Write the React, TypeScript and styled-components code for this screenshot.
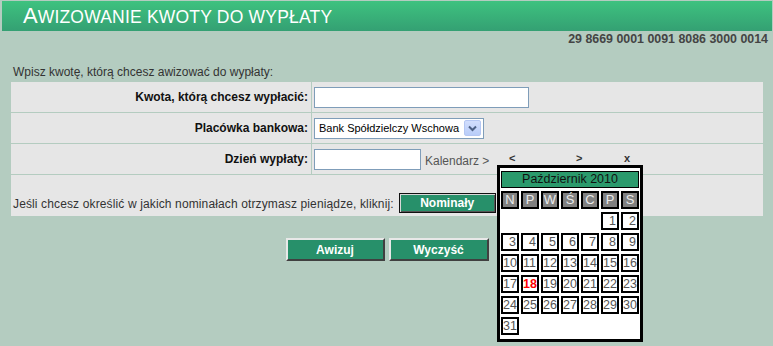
import React from "react";
import styled, { createGlobalStyle } from "styled-components";

const GlobalStyle = createGlobalStyle`
  html, body {
    margin: 0;
    padding: 0;
    background: #b4ccc0;
    font-family: "Liberation Sans", Arial, sans-serif;
    font-size: 12px;
    color: #222;
  }
`;

const Page = styled.div`
  width: 773px;
  height: 346px;
  overflow: hidden;
  padding-top: 1px;
  box-sizing: border-box;
`;

const Header = styled.div`
  margin: 0 1px 0 2px;
  height: 30px;
  background: linear-gradient(#3ec27f, #34a073);
  padding-left: 21px;
  color: #fff;
  font-size: 22px;
  line-height: 30px;
  white-space: nowrap;
`;

const TitleSmall = styled.span`
  font-size: 17.5px;
  text-transform: uppercase;
  letter-spacing: 0.2px;
`;

const Account = styled.div`
  text-align: right;
  padding-right: 5px;
  font-weight: bold;
  font-size: 12.4px;
  line-height: 14px;
  color: #444;
  padding-top: 1px;
`;

const Intro = styled.div`
  margin: 19px 0 3px 13px;
  line-height: 14px;
  color: #333;
`;

const FormWrap = styled.div`
  position: relative;
  margin-left: 11px;
  width: 752px;
`;

const FormGrid = styled.div`
  display: grid;
  grid-template-columns: 300px 1fr;
  gap: 1px;
`;

const LabelCell = styled.div`
  background: #e6e6e6;
  height: 30px;
  display: flex;
  align-items: center;
  justify-content: flex-end;
  padding-right: 3px;
  font-weight: bold;
  color: #111;
`;

const FieldCell = styled.div`
  background: #e6e6e6;
  height: 30px;
  display: flex;
  align-items: center;
  padding-left: 2px;
  gap: 4px;
`;

const WideCell = styled.div`
  grid-column: 1 / -1;
  background: #e6e6e6;
  height: 41px;
  display: flex;
  align-items: flex-end;
  padding: 0 0 3px 2px;
  gap: 5px;
  box-sizing: border-box;
`;

const WideText = styled.span`
  color: #333;
  line-height: 14px;
  padding-bottom: 2px;
  letter-spacing: 0.13px;
`;

const TextInput = styled.input<{ $w: number }>`
  width: ${(p) => p.$w}px;
  height: 21px;
  box-sizing: border-box;
  border: 1px solid #7f9db9;
  background: #fff;
  padding: 0 3px;
  margin: 0;
  font-family: inherit;
  font-size: 12px;
  outline: none;
`;

const SelectBox = styled.div`
  width: 170px;
  height: 21px;
  box-sizing: border-box;
  border: 1px solid #7f9db9;
  background: #fff;
  display: flex;
  align-items: center;
  justify-content: space-between;
  padding: 0 2px 0 4px;
  font-size: 11px;
  color: #000;
`;

const SelectArrow = styled.span`
  width: 17px;
  height: 16px;
  box-sizing: border-box;
  border: 1px solid #b5c7f3;
  border-radius: 2px;
  background: linear-gradient(#d2defd, #b9cdf9);
  display: flex;
  align-items: center;
  justify-content: center;
`;

const CalLink = styled.span`
  color: #555;
  line-height: 14px;
  padding-top: 4px;
`;

const GreenButton = styled.button<{ $w: number; $focus?: boolean }>`
  width: ${(p) => p.$w}px;
  height: ${(p) => (p.$focus ? 20 : 23)}px;
  box-sizing: border-box;
  margin: 0;
  padding: 0;
  background: #27906a;
  color: #fff;
  font-family: inherit;
  font-weight: bold;
  font-size: 12px;
  border: 2px solid;
  border-color: #e8e8e8 #404040 #404040 #e8e8e8;
  ${(p) =>
    p.$focus
      ? `border: 1px solid #111; box-shadow: inset 1px 1px 0 #d8d8d8, inset -1px -1px 0 #555;`
      : ""}
`;

const ButtonRow = styled.div`
  display: flex;
  justify-content: center;
  gap: 4px;
  margin-top: 22px;
  padding-left: 1px;
`;

const Popup = styled.div`
  position: absolute;
  left: 486px;
  top: 67px;
  width: 146px;
`;

const NavRow = styled.div`
  height: 16px;
  font-size: 11px;
  font-weight: bold;
  color: #333;
  line-height: 14px;
`;

const NavItem = styled.span<{ $x: number }>`
  position: absolute;
  left: ${(p) => p.$x}px;
  top: 2px;
`;

const CalBox = styled.div`
  width: 146px;
  box-sizing: border-box;
  border: 3px solid #000;
  background: #fff;
  padding: 3px 1px 4px 1px;
`;

const CalTitle = styled.div`
  height: 17px;
  box-sizing: border-box;
  border: 1px solid #000;
  background: #2b9a6c;
  color: #111;
  text-align: center;
  font-size: 12.5px;
  line-height: 15px;
  margin-bottom: 3px;
`;

const CalGrid = styled.div`
  display: grid;
  grid-template-columns: repeat(7, 18px);
  column-gap: 2px;
  row-gap: 3px;
`;

const DayHead = styled.div`
  height: 18px;
  box-sizing: border-box;
  border: 2px solid #000;
  background: #808080;
  color: #ececec;
  text-align: center;
  font-size: 13px;
  line-height: 14px;
`;

const DayCell = styled.div<{ $today?: boolean; $empty?: boolean }>`
  height: 18px;
  box-sizing: border-box;
  border: 2px solid ${(p) => (p.$empty ? "transparent" : "#000")};
  text-align: right;
  padding-right: 1px;
  font-size: 12.5px;
  line-height: 14px;
  color: ${(p) => (p.$today ? "#ff0000" : "#555")};
  font-weight: ${(p) => (p.$today ? "bold" : "normal")};
`;

const heads = ["N", "P", "W", "Ś", "C", "P", "S"];
const days: (number | null)[] = [
  null, null, null, null, null,
  ...Array.from({ length: 31 }, (_, i) => i + 1),
];

export default function App() {
  return (
    <>
      <GlobalStyle />
      <Page>
        <Header>
          A<TitleSmall>wizowanie kwoty do wypłaty</TitleSmall>
        </Header>
        <Account>29 8669 0001 0091 8086 3000 0014</Account>
        <Intro>Wpisz kwotę, którą chcesz awizować do wypłaty:</Intro>
        <FormWrap>
          <FormGrid>
            <LabelCell>Kwota, którą chcesz wypłacić:</LabelCell>
            <FieldCell>
              <TextInput $w={215} />
            </FieldCell>
            <LabelCell>Placówka bankowa:</LabelCell>
            <FieldCell>
              <SelectBox>
                <span>Bank Spółdzielczy Wschowa</span>
                <SelectArrow>
                  <svg width="9" height="7" viewBox="0 0 9 7">
                    <path d="M1 1.5 L4.5 5 L8 1.5" fill="none" stroke="#4d6185" strokeWidth="2" />
                  </svg>
                </SelectArrow>
              </SelectBox>
            </FieldCell>
            <LabelCell>Dzień wypłaty:</LabelCell>
            <FieldCell>
              <TextInput $w={107} />
              <CalLink>Kalendarz &gt;</CalLink>
            </FieldCell>
            <WideCell>
              <WideText>
                Jeśli chcesz określić w jakich nominałach otrzymasz pieniądze, kliknij:
              </WideText>
              <GreenButton $w={97} $focus>
                Nominały
              </GreenButton>
            </WideCell>
          </FormGrid>
          <Popup>
            <NavRow>
              <NavItem $x={12}>&lt;</NavItem>
              <NavItem $x={79}>&gt;</NavItem>
              <NavItem $x={127}>x</NavItem>
            </NavRow>
            <CalBox>
              <CalTitle>Październik 2010</CalTitle>
              <CalGrid>
                {heads.map((h, i) => (
                  <DayHead key={"h" + i}>{h}</DayHead>
                ))}
                {days.map((d, i) =>
                  d === null ? (
                    <DayCell key={"e" + i} $empty />
                  ) : (
                    <DayCell key={d} $today={d === 18}>
                      {d}
                    </DayCell>
                  )
                )}
              </CalGrid>
            </CalBox>
          </Popup>
        </FormWrap>
        <ButtonRow>
          <GreenButton $w={99}>Awizuj</GreenButton>
          <GreenButton $w={100}>Wyczyść</GreenButton>
        </ButtonRow>
      </Page>
    </>
  );
}
